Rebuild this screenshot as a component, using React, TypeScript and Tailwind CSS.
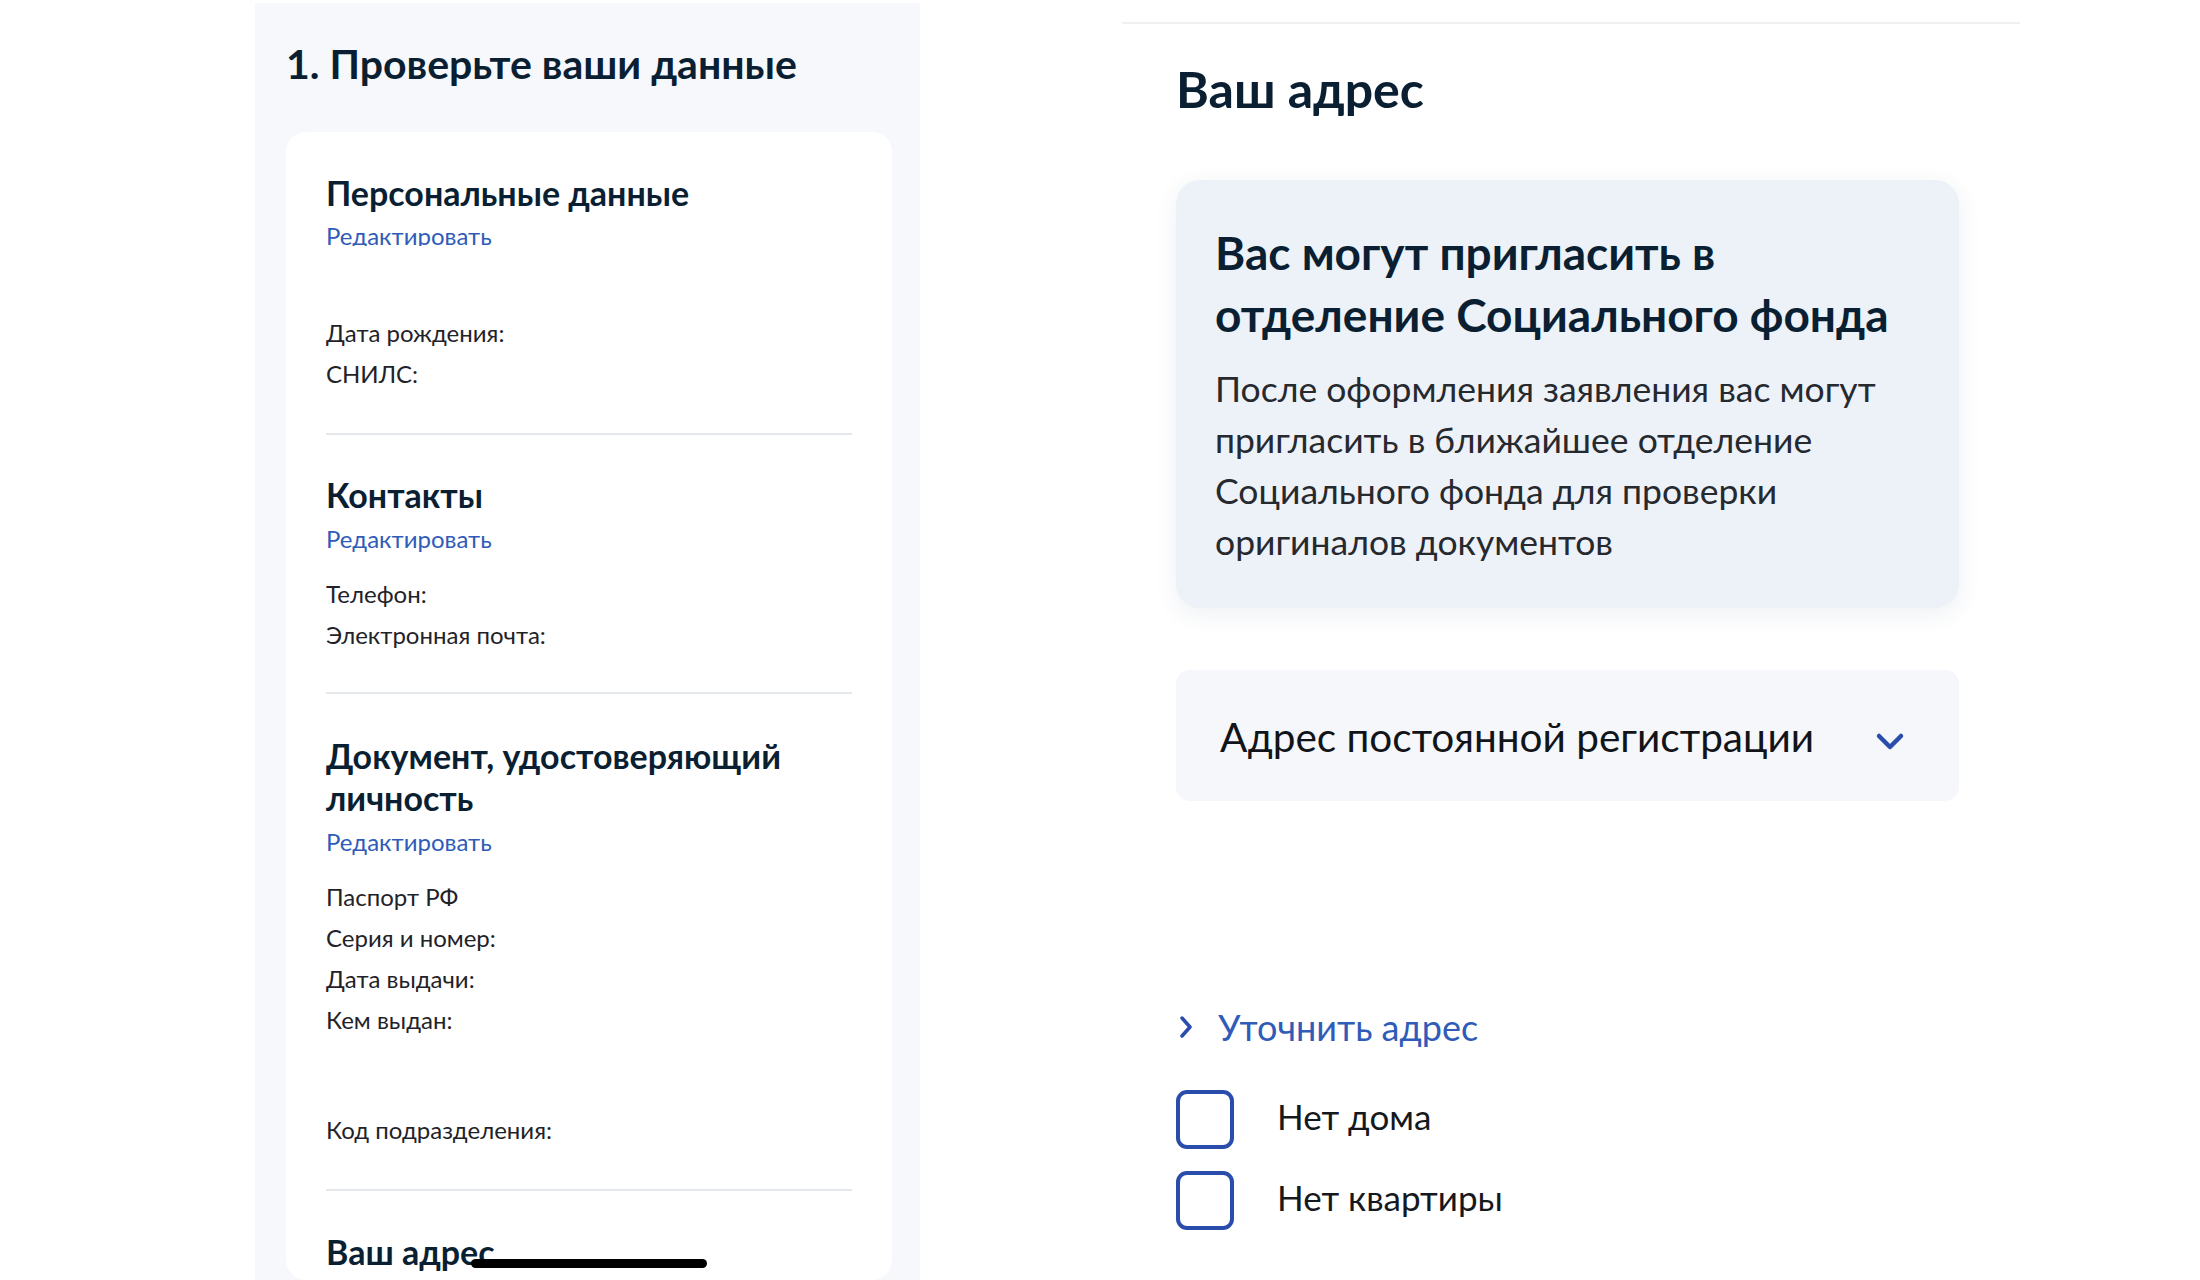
import React from "react";

const font = { fontFamily: "Lato, 'Noto Sans', 'Open Sans', sans-serif" };

function Divider() {
  return <div className="h-[2px] bg-[#e4e7ec]" />;
}

function Link({ clip }: { clip?: boolean }) {
  return (
    <div className={clip ? "h-[26px] overflow-hidden" : ""}>
      <span className="block text-[24px] leading-[32px] text-[#2f5cb8]">Редактировать</span>
    </div>
  );
}

function Line({ children }: { children: React.ReactNode }) {
  return <div className="text-[24px] leading-[41px] text-[#1f2329]">{children}</div>;
}

function Chevron({ dir }: { dir: "down" | "right" }) {
  if (dir === "down") {
    return (
      <svg width="30" height="20" viewBox="0 0 30 20" fill="none">
        <path d="M4 4 L15 15 L26 4" stroke="#2a4caa" strokeWidth="4.5" strokeLinecap="round" strokeLinejoin="round" />
      </svg>
    );
  }
  return (
    <svg width="16" height="26" viewBox="0 0 16 26" fill="none">
      <path d="M4 4 L12 13 L4 22" stroke="#2a4caa" strokeWidth="3.5" strokeLinecap="round" strokeLinejoin="round" />
    </svg>
  );
}

function Checkbox({ label }: { label: string }) {
  return (
    <div className="flex items-center h-[59px]">
      <div className="w-[58px] h-[59px] rounded-[11px] border-[4px] border-[#2a4caa] bg-white shrink-0" />
      <span className="ml-[43px] mb-[8px] text-[35px] leading-[44px] text-[#15181c]">{label}</span>
    </div>
  );
}

export default function App() {
  return (
    <div className="w-[2200px] h-[1280px] bg-white overflow-hidden relative flex" style={font}>
      {/* Left panel */}
      <div className="ml-[255px] mt-[3px] w-[665px] h-[1277px] bg-[#f7f8fc] pl-[31px] pr-[28px] flex flex-col">
        <h1 className="mt-[36px] text-[41px] leading-[50px] font-bold text-[#0b1f33]">1. Проверьте ваши данные</h1>
        <div className="mt-[43px] bg-white rounded-[20px] px-[40px] pt-[40px] flex-1">
          <h2 className="text-[34px] leading-[42px] font-bold text-[#0b1f33]">Персональные данные</h2>
          <div className="mt-[6px]">
            <Link clip />
          </div>
          <div className="mt-[66px]">
            <Line>Дата рождения:</Line>
            <Line>СНИЛС:</Line>
          </div>
          <div className="mt-[39px]">
            <Divider />
          </div>

          <h2 className="mt-[39px] text-[34px] leading-[42px] font-bold text-[#0b1f33]">Контакты</h2>
          <div className="mt-[7px]">
            <Link />
          </div>
          <div className="mt-[18px]">
            <Line>Телефон:</Line>
            <Line>Электронная почта:</Line>
          </div>
          <div className="mt-[37px]">
            <Divider />
          </div>

          <h2 className="mt-[41px] text-[34px] leading-[42px] font-bold text-[#0b1f33]">
            Документ, удостоверяющий
            <br />
            личность
          </h2>
          <div className="mt-[7px]">
            <Link />
          </div>
          <div className="mt-[18px]">
            <Line>Паспорт РФ</Line>
            <Line>Серия и номер:</Line>
            <Line>Дата выдачи:</Line>
            <Line>Кем выдан:</Line>
          </div>
          <div className="mt-[69px]">
            <Line>Код подразделения:</Line>
          </div>
          <div className="mt-[39px]">
            <Divider />
          </div>
          <h2 className="mt-[40px] text-[34px] leading-[42px] font-bold text-[#0b1f33]">Ваш адрес</h2>
        </div>
      </div>

      {/* Right panel */}
      <div className="ml-[202px] w-[898px] flex flex-col">
        <div className="mt-[22px] h-[2px] bg-[#eef0f2]" />
        <div className="pl-[54px] pr-[61px] flex flex-col">
          <h1 className="mt-[37px] text-[50px] leading-[56px] font-bold text-[#0b1f33]">Ваш адрес</h1>
          <div className="mt-[63px] bg-[#edf1f8] rounded-[24px] px-[39px] pt-[42px] pb-[41px] shadow-[0_6px_24px_rgba(40,60,100,0.08)]">
            <div className="text-[46px] leading-[62px] font-bold text-[#0b1f33]">
              Вас могут пригласить в
              <br />
              отделение Социального фонда
            </div>
            <div className="mt-[17px] text-[35.5px] leading-[51px] text-[#26292e]">
              После оформления заявления вас могут
              <br />
              пригласить в ближайшее отделение
              <br />
              Социального фонда для проверки
              <br />
              оригиналов документов
            </div>
          </div>

          <div className="mt-[62px] h-[131px] bg-[#f5f7fa] rounded-[14px] pl-[44px] pr-[54px] flex items-center justify-between">
            <span className="mt-[2px] text-[40.5px] leading-[48px] text-[#111418]">Адрес постоянной регистрации</span>
            <div className="mt-[12px]">
              <Chevron dir="down" />
            </div>
          </div>

          <div className="mt-[202px] flex items-center">
            <div className="ml-[2px] w-[16px] flex justify-center">
              <Chevron dir="right" />
            </div>
            <span className="ml-[24px] text-[36px] leading-[48px] text-[#2f5cb8]">Уточнить адрес</span>
          </div>

          <div className="mt-[39px] flex flex-col gap-[22px]">
            <Checkbox label="Нет дома" />
            <Checkbox label="Нет квартиры" />
          </div>
        </div>
      </div>

      {/* Home indicator */}
      <div className="absolute left-[471px] top-[1259px] w-[236px] h-[9px] rounded-full bg-black" />
    </div>
  );
}
